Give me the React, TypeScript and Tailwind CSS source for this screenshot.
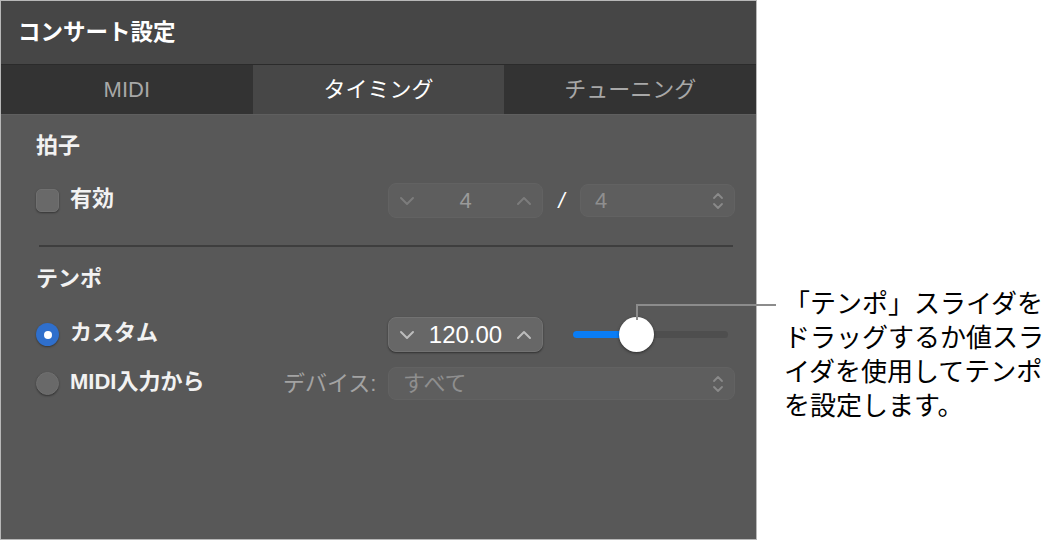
import React from "react"

const font = { fontFamily: '"Liberation Sans", "Noto Sans CJK JP", sans-serif' }

const Chevron = ({ dir, color }: { dir: "up" | "down"; color: string }) => (
  <svg width="16" height="10" viewBox="0 0 16 10" fill="none">
    <path
      d={dir === "down" ? "M2 2 L8 8 L14 2" : "M2 8 L8 2 L14 8"}
      stroke={color}
      strokeWidth="2"
      strokeLinecap="round"
      strokeLinejoin="round"
    />
  </svg>
)

const UpDown = () => (
  <svg width="12" height="20" viewBox="0 0 12 20" fill="none">
    <path d="M2 7 L6 3 L10 7" stroke="#8a8a8a" strokeWidth="1.8" strokeLinecap="round" strokeLinejoin="round" />
    <path d="M2 13 L6 17 L10 13" stroke="#8a8a8a" strokeWidth="1.8" strokeLinecap="round" strokeLinejoin="round" />
  </svg>
)

const Stepper = ({ value, active }: { value: string; active?: boolean }) => (
  <div
    className={`shrink-0 flex items-center justify-between w-[155px] h-[35px] rounded-[8px] px-[10px] ${
      active
        ? "bg-[#676767] border border-[#727272] shadow-[0_1px_2px_rgba(0,0,0,0.45)]"
        : "bg-[#5e5e5e] border border-[#626262]"
    }`}
  >
    <Chevron dir="down" color={active ? "#bcbcbc" : "#7c7c7c"} />
    <span className={`${active ? "text-[24px] text-white" : "text-[22px] text-[#9a9a9a]"}`}>{value}</span>
    <Chevron dir="up" color={active ? "#bcbcbc" : "#7c7c7c"} />
  </div>
)

const Select = ({ value, width }: { value: string; width: string }) => (
  <div
    className={`shrink-0 flex items-center justify-between h-[33px] rounded-[8px] pl-[14px] pr-[10px] bg-[#5e5e5e] border border-[#626262] ${width}`}
  >
    <span className="text-[22px] text-[#8f8f8f]">{value}</span>
    <UpDown />
  </div>
)

const Label = ({ children }: { children: React.ReactNode }) => (
  <span className="text-[22px] font-bold text-[#f2f2f2] leading-none">{children}</span>
)

const App = () => {
  return (
    <div className="relative w-[1064px] h-[540px] bg-white" style={font}>
      <div className="flex flex-col w-[757px] h-[540px] bg-[#585858] border border-[#b8b8b8]">
        {/* title */}
        <div className="h-[63px] bg-[#464646] flex items-center pl-[17px]">
          <span className="text-[22.5px] font-bold text-white">コンサート設定</span>
        </div>
        {/* tabs */}
        <div className="flex h-[50px] border-t border-[#2b2b2b]">
          <div className="flex-1 bg-[#333333] flex items-center justify-center text-[22px] text-[#a8a8a8]">
            MIDI
          </div>
          <div className="flex-1 bg-[#474747] flex items-center justify-center text-[22px] text-white">
            タイミング
          </div>
          <div className="flex-1 bg-[#333333] flex items-center justify-center text-[22px] text-[#a8a8a8]">
            チューニング
          </div>
        </div>
        {/* content */}
        <div className="flex flex-col pl-[35px] pr-[10px] pt-[19px] border-t border-[#5f5f5f]">
          <div className="h-[24px] flex items-center">
            <Label>拍子</Label>
          </div>
          <div className="flex items-center h-[35px] mt-[25px]">
            <div className="shrink-0 flex items-center w-[352px]">
              <div className="w-[23px] h-[23px] rounded-[5px] bg-[#696969] border border-[#707070] shadow-[0_1px_2px_rgba(0,0,0,0.4)]" />
              <span className="ml-[11px]">
                <Label>有効</Label>
              </span>
            </div>
            <Stepper value="4" />
            <span className="shrink-0 w-[37px] text-center text-[22px] text-white italic">/</span>
            <Select value="4" width="w-[155px]" />
          </div>
          <div className="h-[2px] bg-[#3e3e3e] mt-[27px] ml-[3px] mr-[13px]" />
          <div className="h-[24px] flex items-center mt-[20px]">
            <Label>テンポ</Label>
          </div>
          <div className="flex items-center h-[35px] mt-[26px]">
            <div className="shrink-0 flex items-center w-[352px]">
              <div className="w-[23px] h-[23px] rounded-full bg-[#2f6fcc] flex items-center justify-center shadow-[0_1px_2px_rgba(0,0,0,0.4)]">
                <div className="w-[8px] h-[8px] rounded-full bg-white" />
              </div>
              <span className="ml-[11px]">
                <Label>カスタム</Label>
              </span>
            </div>
            <Stepper value="120.00" active />
            <div className="shrink-0 relative ml-[30px] w-[155px] h-[35px] flex items-center">
              <div className="w-full h-[7px] rounded-full bg-[#4e4e4e]" />
              <div className="absolute left-0 top-[14px] w-[64px] h-[7px] rounded-full bg-[#0a7df5]" />
              <div className="absolute left-[46px] top-0 w-[35px] h-[35px] rounded-full bg-white shadow-[0_1px_3px_rgba(0,0,0,0.5)]" />
            </div>
          </div>
          <div className="flex items-center h-[33px] mt-[15px]">
            <div className="shrink-0 flex items-center w-[247px]">
              <div className="w-[23px] h-[23px] rounded-full bg-[#696969] border border-[#707070] shadow-[0_1px_2px_rgba(0,0,0,0.4)]" />
              <span className="ml-[11px]">
                <Label>MIDI入力から</Label>
              </span>
            </div>
            <span className="shrink-0 w-[105px] text-[22px] text-[#a3a3a3]">デバイス:</span>
            <Select value="すべて" width="w-[347px]" />
          </div>
        </div>
      </div>

      {/* callout line */}
      <div className="absolute left-[636px] top-[304px] w-[2px] h-[16px] bg-[#8c8c8c]" />
      <div className="absolute left-[636px] top-[304px] w-[140px] h-[2px] bg-[#8c8c8c]" />

      {/* callout text */}
      <div
        className="absolute left-[784px] top-[285px] text-[26px] leading-[34px] text-black"
        style={{ fontFamily: '"Noto Sans CJK JP", sans-serif' }}
      >
        <div>「テンポ」スライダを</div>
        <div>ドラッグするか値スラ</div>
        <div>イダを使用してテンポ</div>
        <div>を設定します。</div>
      </div>
    </div>
  )
}

export default App
